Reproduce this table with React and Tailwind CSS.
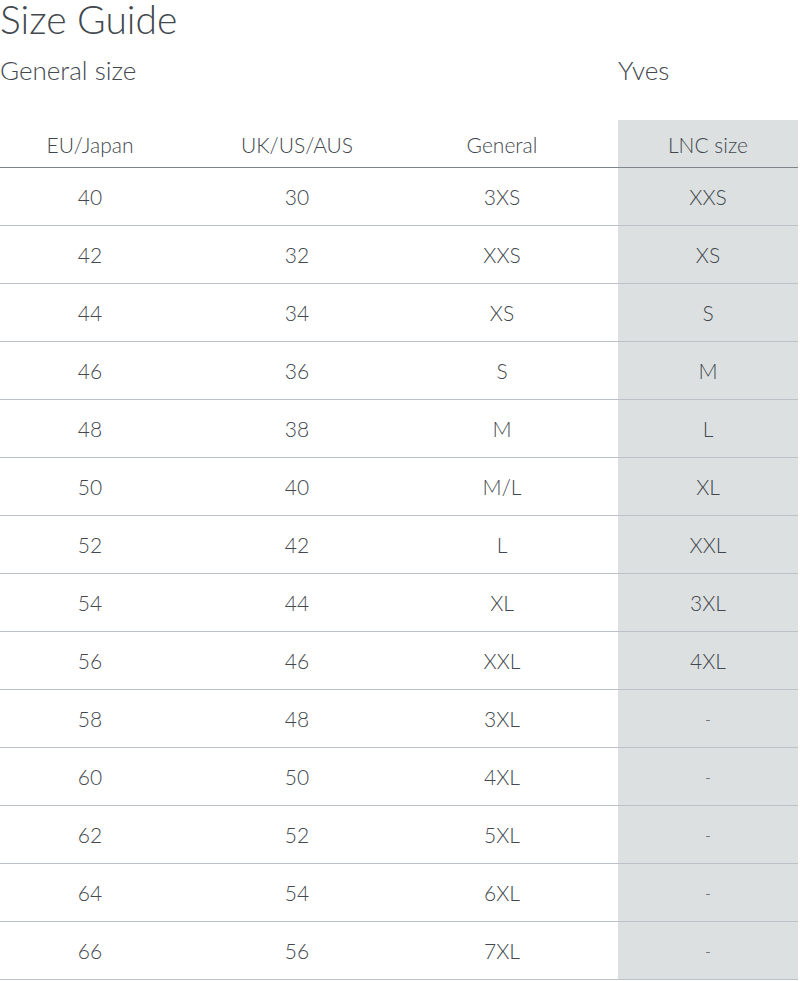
const rows = [
  ['40', '30', '3XS', 'XXS'],
  ['42', '32', 'XXS', 'XS'],
  ['44', '34', 'XS', 'S'],
  ['46', '36', 'S', 'M'],
  ['48', '38', 'M', 'L'],
  ['50', '40', 'M/L', 'XL'],
  ['52', '42', 'L', 'XXL'],
  ['54', '44', 'XL', '3XL'],
  ['56', '46', 'XXL', '4XL'],
  ['58', '48', '3XL', '-'],
  ['60', '50', '4XL', '-'],
  ['62', '52', '5XL', '-'],
  ['64', '54', '6XL', '-'],
  ['66', '56', '7XL', '-'],
];

export default function App() {
  return (
    <div className="w-[800px] h-[981px] bg-white text-[#42484d] font-light overflow-hidden font-['Lato','Liberation_Sans',sans-serif]">
      {/* Heading */}
      <h1 className="text-[39px] leading-[44px] -mt-[3px] font-light">Size Guide</h1>
      <div className="flex mt-[14px] text-[26px] leading-[30px]">
        <div className="w-[618px]">General size</div>
        <div>Yves</div>
      </div>

      {/* Table */}
      <div className="mt-[35px] w-[798px]">
        <div className="grid grid-cols-[180px_234px_204px_180px] h-[48px] border-b border-[#7f868b] text-[21px]">
          <div className="flex items-center justify-center pt-[2px]">EU/Japan</div>
          <div className="flex items-center justify-center pt-[2px]">UK/US/AUS</div>
          <div className="flex items-center justify-center pr-7 pt-[2px]">General</div>
          <div className="flex items-center justify-center bg-[#dce0e1] pt-[2px]">LNC size</div>
        </div>
        {rows.map((r, i) => (
          <div
            key={i}
            className="grid grid-cols-[180px_234px_204px_180px] h-[58px] border-b border-[#bcc1c8] text-[21px]"
          >
            <div className="flex items-center justify-center">{r[0]}</div>
            <div className="flex items-center justify-center">{r[1]}</div>
            <div className="flex items-center justify-center pr-7">{r[2]}</div>
            <div className="flex items-center justify-center bg-[#dce0e1]">
              {r[3] === '-' ? <span className="text-[16px]">-</span> : r[3]}
            </div>
          </div>
        ))}
      </div>
    </div>
  );
}
